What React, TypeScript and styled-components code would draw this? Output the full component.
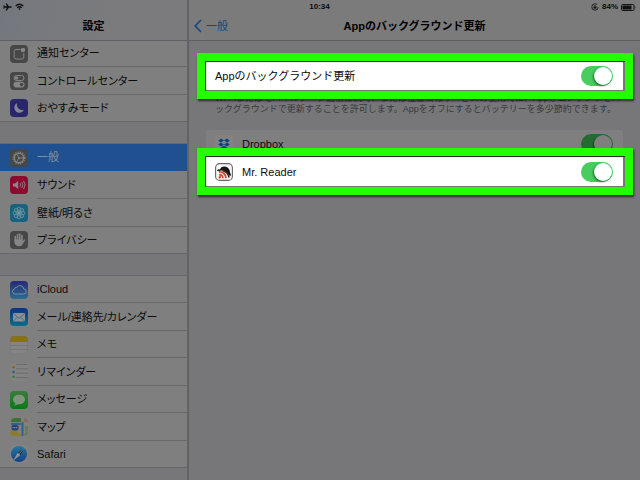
import React, { ReactNode } from "react";
import styled, { createGlobalStyle, css } from "styled-components";

const GlobalStyle = createGlobalStyle`
  *, *::before, *::after { box-sizing: border-box; }
  html, body { margin: 0; }
  body {
    background: #77777a;
    color: #0b0b0b;
    font-family: "Liberation Sans", "Noto Sans CJK JP", sans-serif;
    font-size: 11px;
    line-height: 16px;
  }
  ul { list-style: none; margin: 0; padding: 0; }
`;

const Page = styled.div`
  position: relative;
  display: flex;
  height: 100vh;
  overflow: hidden;
`;

const StatusBar = styled.div`
  position: absolute;
  z-index: 2;
  inset: 0 0 auto;
  height: 14px;
  padding: 0 4px 0 3px;
  display: grid;
  grid-template-columns: 1fr auto 1fr;
  align-items: center;
  font-size: 8px;
  font-weight: bold;
  line-height: 14px;
  pointer-events: none;
`;

const StatusGroup = styled.div<{ $end?: boolean }>`
  display: flex;
  align-items: center;
  gap: 3px;
  justify-content: ${(p) => (p.$end ? "flex-end" : "flex-start")};
`;

const Sidebar = styled.nav`
  flex: 0 0 189px;
  border-right: 2px solid #636367;
  font-feature-settings: "palt";
`;

const Header = styled.header<{ $tint: string }>`
  position: relative;
  z-index: 1;
  height: 41px;
  display: grid;
  grid-template-columns: 1fr auto 1fr;
  align-items: center;
  padding: 12px 5px 0;
  background: ${(p) => p.$tint};
  border-bottom: 1px solid #606064;
`;

const Title = styled.h1`
  grid-column: 2;
  margin: 0;
  font-size: 11px;
  line-height: 16px;
  font-weight: bold;
  color: #000;
`;

const BackLink = styled.a`
  display: flex;
  align-items: center;
  gap: 4px;
  color: #124b83;
  text-decoration: none;
`;

const Group = styled.ul`
  background: #7f7f7f;
  border-bottom: 1px solid #68686b;
  &:first-of-type { margin-top: -1px; }
  & + & {
    margin-top: 21px;
    border-top: 1px solid #68686b;
  }
`;

const Item = styled.li<{ $tall?: boolean }>`
  height: ${(p) => (p.$tall ? 28 : 27)}px;
  &:last-child { height: 26px; }
`;

const ItemLink = styled.a<{ $active?: boolean }>`
  display: flex;
  height: 100%;
  align-items: center;
  gap: 9px;
  padding-left: 10px;
  color: inherit;
  text-decoration: none;
  ${(p) => p.$active && css`
    background: #20508f;
    color: #7f8fa6;
  `}
`;

const ItemLabel = styled.span<{ $line?: boolean }>`
  flex: 1;
  height: 100%;
  display: flex;
  align-items: center;
  border-bottom: 1px solid ${(p) => (p.$line ? "#69696b" : "transparent")};
`;

const IconSvg = styled.svg`
  flex: none;
  display: block;
`;

const Main = styled.main`
  flex: 1;
  min-width: 0;
`;

const Content = styled.div`
  padding: 21px 17px 0;
`;

const Note = styled.p`
  margin: 3px 9px 15px;
  font-size: 9px;
  line-height: 11px;
  color: #39393c;
  white-space: nowrap;
`;

const SettingRow = styled.label<{ $marked?: boolean }>`
  position: relative;
  display: flex;
  align-items: center;
  gap: 9px;
  height: 28px;
  padding: 0 10px 0 9px;
  background: #7f7f7f;
  ${(p) => p.$marked && css`
    z-index: 1;
    background: #fff;
    &::after {
      content: "";
      position: absolute;
      inset: -9px -10px -9px -9px;
      border: 8px solid #24ff00;
      box-shadow: 1px 2px 2px rgba(0, 0, 0, 0.65), inset 1px 1px 1px rgba(0, 0, 0, 0.7);
      pointer-events: none;
    }
  `}
`;

const RowText = styled.span`
  flex: 1;
`;

const AppList = styled.div`
  & > label:first-child { border-radius: 3px 3px 0 0; height: 27px; }
  & > label:last-child { height: 29px; }
`;

const Switch = styled.input<{ $dim?: boolean }>`
  appearance: none;
  position: relative;
  margin: 0;
  width: 32px;
  height: 20px;
  border-radius: 10px;
  display: flex;
  justify-content: flex-end;
  padding: 1px;
  background: ${(p) => (p.$dim ? "#266c32" : "#48cd5e")};
  &::before {
    content: "";
    width: 18px;
    height: 18px;
    border-radius: 9px;
    background: ${(p) => (p.$dim ? "#7f7f7f" : "#fff")};
    box-shadow: -1px 1px 2px rgba(0, 40, 10, 0.6);
  }
  &:not(:checked) {
    justify-content: flex-start;
    background: #c8c8c8;
  }
`;

function Tile({ fill, children }: { fill: string; children?: ReactNode }) {
  return (
    <IconSvg width="18" height="18" viewBox="0 0 18 18" aria-hidden="true">
      <defs>
        <linearGradient id="cloudFill" x2="0" y2="1"><stop stopColor="#292875" /><stop offset="1" stopColor="#2b6c91" /></linearGradient>
        <linearGradient id="mailFill" x2="0" y2="1"><stop stopColor="#0b3184" /><stop offset="1" stopColor="#0c6d87" /></linearGradient>
        <linearGradient id="messageFill" x2="0" y2="1"><stop stopColor="#3f793d" /><stop offset="1" stopColor="#087b10" /></linearGradient>
        <linearGradient id="safariFill" x2="0" y2="1"><stop stopColor="#2377a0" /><stop offset="1" stopColor="#163f83" /></linearGradient>
      </defs>
      <rect width="18" height="18" rx="4" fill={fill} />
      {children}
    </IconSvg>
  );
}

const light = "#868686";
const GRAY = "#474748";

const NotificationIcon = () => (
  <Tile fill={GRAY}>
    <path d="M10.5 4.5H6A1.8 1.8 0 0 0 4.2 6.3v6A1.8 1.8 0 0 0 6 14h6a1.8 1.8 0 0 0 1.8-1.8V8" fill="none" stroke={light} />
    <rect x="11" y="3" width="4" height="4" rx="1.3" fill={light} />
  </Tile>
);
const ControlIcon = () => (
  <Tile fill={GRAY}>
    <rect x="4" y="3.5" width="10" height="5" rx="2.5" fill="none" stroke={light} />
    <circle cx="6.5" cy="6" r="1.8" fill={light} />
    <rect x="3.5" y="9.8" width="11" height="5.6" rx="2.8" fill={light} />
    <circle cx="11.6" cy="12.6" r="1.8" fill={GRAY} />
  </Tile>
);
const MoonIcon = () => (
  <Tile fill="#29266b">
    <path d="M7.2 4A5.1 5.1 0 1 0 14 10.8 5.4 5.4 0 0 1 7.2 4Z" fill="#858593" />
  </Tile>
);
const GearIcon = () => (
  <Tile fill={GRAY}>
    <circle cx="9" cy="9" r="5.8" fill="none" stroke={light} strokeWidth="1.4" strokeDasharray="1.2 1.08" />
    <circle cx="9" cy="9" r="4.6" fill="none" stroke={light} strokeWidth="1.3" />
    <path d="M9 9h4M9 9 7 5.5M9 9l-2 3.5" stroke={light} strokeWidth=".9" />
    <circle cx="9" cy="9" r="1" fill={light} />
  </Tile>
);
const SoundIcon = () => (
  <Tile fill="#8b0b2f">
    <path d="M3 7.4h2L8.2 5v8L5 10.6H3Z" fill="#91818a" />
    <path d="M10 7.2q1.2 1.8 0 3.6M11.8 6q2.2 3 0 6M13.6 4.9q3 4.1 0 8.2" fill="none" stroke="#91818a" strokeWidth=".9" />
  </Tile>
);
const FlowerIcon = () => (
  <Tile fill="#19617e">
    {[0, 45, 90, 135, 180, 225, 270, 315].map((angle) => (
      <ellipse key={angle} cx="9" cy="5.8" rx="1.9" ry="2.7" transform={`rotate(${angle} 9 9)`} fill="none" stroke="#7297a3" strokeWidth=".8" />
    ))}
    <circle cx="9" cy="9" r="1.3" fill="#7297a3" />
  </Tile>
);
const HandIcon = () => (
  <Tile fill={GRAY}>
    <path d="M5.3 10V5.5M7.5 9V3.6M9.7 9V3M11.9 9V4.5" stroke={light} strokeWidth="1.6" strokeLinecap="round" />
    <path d="M4.5 8.5h8.2v1.8l1.5-1.7q1-.6 1 .3l-3 5Q11.4 15.3 9 15.3 4.500 15 4.500 11Z" fill={light} />
  </Tile>
);
const CloudIcon = () => (
  <Tile fill="url(#cloudFill)">
    <path d="M4.600 13a2.500 2.500 0 0 1-.2-4.900 2.200 2.200 0 0 1 2.500-1.800 3.700 3.700 0 0 1 6.800 1.700 2.500 2.500 0 0 1 .2 5Z" fill="none" stroke="#8294aa" strokeWidth=".9" />
  </Tile>
);
const MailIcon = () => (
  <Tile fill="url(#mailFill)">
    <rect x="3" y="5" width="12" height="8.500" rx="1" fill="#8b9195" />
    <path d="m3.300 5.400 5.700 5 5.700-5M3.300 13.200l4-4M14.700 13.200l-4-4" fill="none" stroke="#3a617b" strokeWidth=".7" />
  </Tile>
);
const MemoIcon = () => (
  <Tile fill="#858585">
    <path d="M0 6V4a4 4 0 0 1 4-4h10a4 4 0 0 1 4 4v2Z" fill="#8a7114" />
    <path d="M0 9.500h18M0 13.500h18" stroke="#707070" strokeWidth=".7" />
    <rect x=".3" y=".3" width="17.400" height="17.400" rx="4" fill="none" stroke="#707070" strokeWidth=".4" />
  </Tile>
);
const ReminderIcon = () => (
  <Tile fill="#838383">
    <path d="M6 5.800h12M6 10.200h12M6 14.600h12M6 1.500h11" stroke="#606060" strokeWidth=".7" />
    <circle cx="3.500" cy="4.300" r="1.300" fill="#89601c" />
    <circle cx="3.500" cy="9" r="1.300" fill="#255e83" />
    <circle cx="3.500" cy="13.700" r="1.300" fill="#3a7440" />
  </Tile>
);
const MessageIcon = () => (
  <Tile fill="url(#messageFill)">
    <ellipse cx="9" cy="8.500" rx="6" ry="4.800" fill="#83917f" />
    <path d="M5.500 11.500q.2 2-1.500 3 2.700.2 4.300-1.700Z" fill="#83917f" />
  </Tile>
);
const MapIcon = () => (
  <Tile fill="#818174">
    <path d="M1.500 1.300 4 0h7v4H1Z" fill="#3b713a" />
    <path d="M14 0a4 4 0 0 1 4 4H14Z" fill="#806d6d" />
    <path d="M1 6h10M12.500 4v14" stroke="#345f91" strokeWidth="2" />
    <path d="M0 13q6-2 12 5H4a4 4 0 0 1-4-4Z" fill="#8a7c2d" />
    <path d="M15 8h3v4l-3 2ZM14 16l4-3v1q0 3-3 4Z" fill="#65795d" />
    <rect x="1.500" y="7" width="7" height="5.500" rx="2" fill="#293e78" />
    <path d="M2.500 9.700h5" stroke="#8a8999" strokeWidth="1.200" strokeDasharray="1.200 .5" />
  </Tile>
);
const SafariIcon = () => (
  <Tile fill="#838383">
    <circle cx="9" cy="9" r="8" fill="url(#safariFill)" />
    <path d="m14.500 3-4.300 7.200L7.800 7.800Z" fill="#2b2b33" />
    <path d="m3.500 15 4.300-7.200 2.400 2.400Z" fill="#8f989c" />
    <path d="M14.500 3 3.500 15" stroke="#8f989c" strokeWidth=".7" />
  </Tile>
);
const DropboxIcon = () => (
  <Tile fill="#838383">
    <path d="m6.200 3.500 2.800 2-3.100 2L3.200 5.500ZM11.800 3.500l3 2-2.700 2L9 5.500ZM5.900 7.500 9 9.500l-2.800 2-3-2ZM12.100 7.500l2.700 2-3 2L9 9.500ZM5.700 12.200l.5.300L9 10.500l2.800 2 .5-.3v1L9 15l-3.300-1.800Z" fill="#0d4578" />
  </Tile>
);
const ReaderIcon = () => (
  <IconSvg width="18" height="18" viewBox="0 0 18 18" aria-hidden="true">
    <rect x=".6" y=".6" width="16.800" height="16.800" rx="4" fill="#faf7f5" stroke="#666" strokeWidth="1.100" />
    <path d="M5 6.500q1-3.500 5-3 4.800 1 5 6l1.200 2.800q-1.400 1-2.500-.6Q9 5.800 3.500 8.300 2 8.300 2.200 7.200 3 6 5 6.500Z" fill="#171414" />
    <path d="M7.500 7.500Q13 9 14 14.500" fill="none" stroke="#3a2020" strokeWidth="1.500" />
    <path d="M4 8.800q6.500 0 7 6.400M4 11.600q3.700 0 4 3.600" fill="none" stroke="#d8422f" strokeWidth="1.700" />
    <circle cx="4.800" cy="14.300" r="1.200" fill="#d8422f" />
  </IconSvg>
);

type Entry = { label: string; Icon: () => React.JSX.Element; active?: boolean; tall?: boolean };

const groups: Entry[][] = [
  [
    { label: "通知センター", Icon: NotificationIcon },
    { label: "コントロールセンター", Icon: ControlIcon, tall: true },
    { label: "おやすみモード", Icon: MoonIcon },
  ],
  [
    { label: "一般", Icon: GearIcon, active: true },
    { label: "サウンド", Icon: SoundIcon, tall: true },
    { label: "壁紙/明るさ", Icon: FlowerIcon, tall: true },
    { label: "プライバシー", Icon: HandIcon },
  ],
  [
    { label: "iCloud", Icon: CloudIcon },
    { label: "メール/連絡先/カレンダー", Icon: MailIcon, tall: true },
    { label: "メモ", Icon: MemoIcon },
    { label: "リマインダー", Icon: ReminderIcon, tall: true },
    { label: "メッセージ", Icon: MessageIcon },
    { label: "マップ", Icon: MapIcon, tall: true },
    { label: "Safari", Icon: SafariIcon },
  ],
];

export default function App() {
  return (
    <Page>
      <GlobalStyle />
      <Sidebar>
        <Header $tint="linear-gradient(100deg, #74787e, #7b7b7d 60%)">
          <Title>設定</Title>
        </Header>
        {groups.map((items, g) => (
          <Group key={g}>
            {items.map(({ label, Icon, active, tall }, i) => (
              <Item key={label} $tall={tall}>
                <ItemLink href="#" $active={active} aria-current={active ? "page" : undefined}>
                  <Icon />
                  <ItemLabel $line={!active && i < items.length - 1}>{label}</ItemLabel>
                </ItemLink>
              </Item>
            ))}
          </Group>
        ))}
      </Sidebar>
      <Main>
        <Header $tint="#7b7b7c">
          <BackLink href="#">
            <IconSvg width="8" height="14" viewBox="0 0 8 14" aria-hidden="true">
              <path d="M7 1 1.200 7 7 13" fill="none" stroke="#124b83" strokeWidth="1.700" />
            </IconSvg>
            一般
          </BackLink>
          <Title as="h2">Appのバックグラウンド更新</Title>
        </Header>
        <Content>
          <SettingRow $marked>
            <RowText>Appのバックグラウンド更新</RowText>
            <Switch type="checkbox" role="switch" defaultChecked />
          </SettingRow>
          <Note>
            Wi-Fiまたはモバイルデータ通信接続時、または位置情報サービスの使用時に、Appがコンテンツをバ<br />
            ックグラウンドで更新することを許可します。Appをオフにするとバッテリーを多少節約できます。
          </Note>
          <AppList>
            <SettingRow>
              <DropboxIcon />
              <RowText>Dropbox</RowText>
              <Switch type="checkbox" role="switch" defaultChecked $dim />
            </SettingRow>
            <SettingRow $marked>
              <ReaderIcon />
              <RowText>Mr. Reader</RowText>
              <Switch type="checkbox" role="switch" defaultChecked />
            </SettingRow>
          </AppList>
        </Content>
      </Main>
      <StatusBar>
        <StatusGroup>
          <IconSvg width="9" height="8" viewBox="0 0 9 8" aria-hidden="true">
            <path d="M8.800 4q0 .7-1 .7H5.800L3.600 7.700H2.700L3.700 4.700H1.900L1 5.800H.2L.7 4 .2 2.200H1l.9 1.100h1.800L2.700.3h.9l2.200 3h2q1 0 1 .7Z" fill="#111" />
          </IconSvg>
          <IconSvg width="9" height="8" viewBox="0 0 9 8" aria-hidden="true">
            <path d="M.7 3q3.800-3.400 7.600 0M2.200 4.700q2.300-2 4.600 0" fill="none" stroke="#111" strokeWidth="1.300" />
            <path d="M4.500 7.200 3.300 5.700q1.200-.8 2.400 0Z" fill="#111" />
          </IconSvg>
        </StatusGroup>
        <span>10:34</span>
        <StatusGroup $end>
          <IconSvg width="8" height="8" viewBox="0 0 8 8" aria-hidden="true">
            <circle cx="4" cy="4" r="3.200" fill="none" stroke="#111" strokeWidth=".8" strokeDasharray="17 3" />
            <rect x="2.600" y="3.700" width="2.800" height="1.900" fill="#111" />
            <path d="M3.200 4V2.800q.8-.9 1.600 0V4" fill="none" stroke="#111" strokeWidth=".6" />
          </IconSvg>
          <span>84%</span>
          <IconSvg width="15" height="7" viewBox="0 0 15 7" aria-hidden="true">
            <rect x=".5" y=".5" width="12.500" height="6" rx="1.200" fill="none" stroke="#111" />
            <rect x="1.500" y="1.500" width="9" height="4" fill="#111" />
            <path d="M13.800 2q1.200 1.500 0 3Z" fill="#111" />
          </IconSvg>
        </StatusGroup>
      </StatusBar>
    </Page>
  );
}
